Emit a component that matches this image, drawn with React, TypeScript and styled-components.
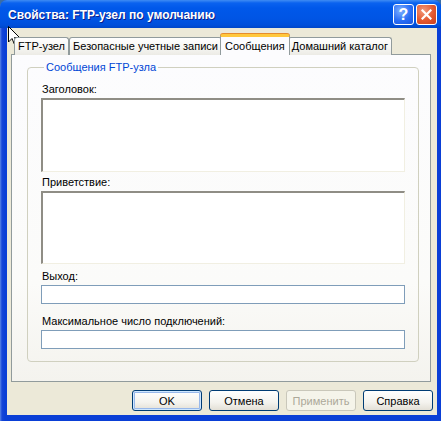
import styled, { createGlobalStyle } from "styled-components"

const Global = createGlobalStyle`
  html, body {
    margin: 0;
    padding: 0;
    background: #3a6ea5;
  }
  * {
    box-sizing: border-box;
  }
`

const Window = styled.div`
  position: relative;
  width: 441px;
  height: 421px;
  display: flex;
  flex-direction: column;
  background: linear-gradient(90deg, #5a86e6 0px, #1646d8 2px, #0a3fd6 5px, #0a3fd6 100%);
  border-radius: 7px 7px 0 0;
  overflow: hidden;
  font-family: "Liberation Sans", Arial, sans-serif;
  font-size: 11px;
  color: #000;
`

const TitleBar = styled.div`
  height: 28px;
  flex: none;
  display: flex;
  align-items: center;
  justify-content: space-between;
  padding: 0 4px 0 8px;
  background: linear-gradient(
    180deg,
    #3f8cf3 0px,
    #0a62ef 3px,
    #0058ea 8px,
    #0055e5 18px,
    #004fdb 25px,
    #0046c8 28px
  );
`

const Title = styled.div`
  color: #fff;
  font-weight: bold;
  font-size: 12px;
  text-shadow: 1px 1px 0 #0a1e8a;
  padding-top: 1px;
`

const Controls = styled.div`
  display: flex;
  gap: 2px;
  padding-top: 1px;
`

const CaptionButton = styled.div<{ $close?: boolean }>`
  width: 21px;
  height: 21px;
  border: 1px solid #fff;
  border-radius: 3px;
  display: flex;
  align-items: center;
  justify-content: center;
  color: #fff;
  font-weight: bold;
  font-size: 16px;
  background: ${(p) =>
    p.$close
      ? "radial-gradient(circle at 35% 30%, #f29a7c 0%, #e3582f 55%, #c8401c 100%)"
      : "radial-gradient(circle at 35% 30%, #7fb0ff 0%, #2a6ef5 55%, #1a55de 100%)"};
`

const Body = styled.div`
  flex: 1;
  margin: 0 4px 6px 7px;
  background: #ece9d8;
  padding: 6px 4px 0 4px;
  display: flex;
  flex-direction: column;
`

const TabStrip = styled.div`
  display: flex;
  align-items: flex-end;
  height: 21px;
  padding-left: 3px;
  position: relative;
  z-index: 1;
`

const Tab = styled.div<{ $active?: boolean }>`
  height: ${(p) => (p.$active ? "21px" : "18px")};
  margin: ${(p) => (p.$active ? "0 -2px" : "0")};
  padding: ${(p) => (p.$active ? "3px 4px 0" : "2px 3px 0")};
  border: 1px solid #919b9c;
  border-bottom: none;
  border-radius: 3px 3px 0 0;
  white-space: nowrap;
  position: relative;
  z-index: ${(p) => (p.$active ? 2 : 1)};
  background: ${(p) =>
    p.$active
      ? "#fcfcfe"
      : "linear-gradient(180deg, #ffffff 0%, #f7f7f4 50%, #ecebe5 100%)"};
  border-top: ${(p) => (p.$active ? "3px solid #ffc83c" : "1px solid #919b9c")};
  box-shadow: ${(p) => (p.$active ? "0 -1px 0 #e68b2c" : "none")};
`

const Panel = styled.div`
  height: 328px;
  margin-top: -1px;
  margin-right: 2px;
  border: 1px solid #919b9c;
  background: linear-gradient(180deg, #fcfcfe 0%, #fbfbf9 70%, #f4f3ee 100%);
  padding: 6px 11px 0 15px;
`

const Group = styled.fieldset`
  margin: 0;
  height: 301px;
  border: 1px solid #d0d0bf;
  border-radius: 4px;
  padding: 9px 13px 0 13px;
  display: flex;
  flex-direction: column;
`

const Legend = styled.legend`
  color: #0046d5;
  padding: 0 2px;
  margin-left: 3px;
  line-height: 13px;
`

const Field = styled.div<{ $top: number }>`
  margin-top: ${(p) => p.$top}px;
  display: flex;
  flex-direction: column;
`

const Label = styled.div`
  line-height: 13px;
  margin-bottom: 2px;
  padding-left: 1px;
`

const Memo = styled.div<{ $height: number }>`
  height: ${(p) => p.$height}px;
  background: #fff;
  border-top: 2px solid #8f8d85;
  border-left: 2px solid #8f8d85;
  border-right: 1px solid #f1efe2;
  border-bottom: 1px solid #f1efe2;
`

const Input = styled.div`
  height: 19px;
  background: #fff;
  border: 1px solid #7f9db9;
`

const ButtonRow = styled.div`
  display: flex;
  justify-content: flex-end;
  gap: 7px;
  margin-top: 8px;
`

const Button = styled.div<{ $default?: boolean; $disabled?: boolean }>`
  width: 70px;
  height: 21px;
  display: flex;
  align-items: center;
  justify-content: center;
  border: 1px solid ${(p) => (p.$disabled ? "#c9c7ba" : "#003c74")};
  border-radius: 3px;
  color: ${(p) => (p.$disabled ? "#aca899" : "#000")};
  background: ${(p) =>
    p.$disabled
      ? "#f5f4ea"
      : "linear-gradient(180deg, #ffffff 0%, #f4f3ee 60%, #e3e0d6 100%)"};
  box-shadow: ${(p) =>
    p.$default ? "inset 0 0 0 1px #cee7ff, inset 0 0 0 2px #98b8ea" : "none"};
`

const Cursor = styled.svg`
  position: absolute;
  left: 8px;
  top: 26px;
`

export default function App() {
  return (
    <>
      <Global />
      <Window>
        <TitleBar>
          <Title>Свойства: FTP-узел по умолчанию</Title>
          <Controls>
            <CaptionButton>?</CaptionButton>
            <CaptionButton $close>
              <svg width="11" height="11" viewBox="0 0 11 11">
                <path d="M1.5 1.5 L9.5 9.5 M9.5 1.5 L1.5 9.5" stroke="#fff" strokeWidth="2.2" strokeLinecap="square" />
              </svg>
            </CaptionButton>
          </Controls>
        </TitleBar>
        <Body>
          <TabStrip>
            <Tab>FTP-узел</Tab>
            <Tab>Безопасные учетные записи</Tab>
            <Tab $active>Сообщения</Tab>
            <Tab>Домашний каталог</Tab>
          </TabStrip>
          <Panel>
            <Group>
              <Legend>Сообщения FTP-узла</Legend>
              <Field $top={0}>
                <Label>Заголовок:</Label>
                <Memo $height={74} />
              </Field>
              <Field $top={4}>
                <Label>Приветствие:</Label>
                <Memo $height={73} />
              </Field>
              <Field $top={6}>
                <Label>Выход:</Label>
                <Input />
              </Field>
              <Field $top={11}>
                <Label>Максимальное число подключений:</Label>
                <Input />
              </Field>
            </Group>
          </Panel>
          <ButtonRow>
            <Button $default>OK</Button>
            <Button>Отмена</Button>
            <Button $disabled>Применить</Button>
            <Button>Справка</Button>
          </ButtonRow>
        </Body>
        <Cursor width="13" height="20" viewBox="0 0 13 20">
          <path d="M0.5 0.5 L0.5 16 L4 12.5 L6.5 18.5 L9 17.5 L6.5 11.5 L11.5 11.5 Z" fill="#fff" stroke="#000" strokeWidth="1" />
        </Cursor>
      </Window>
    </>
  )
}
